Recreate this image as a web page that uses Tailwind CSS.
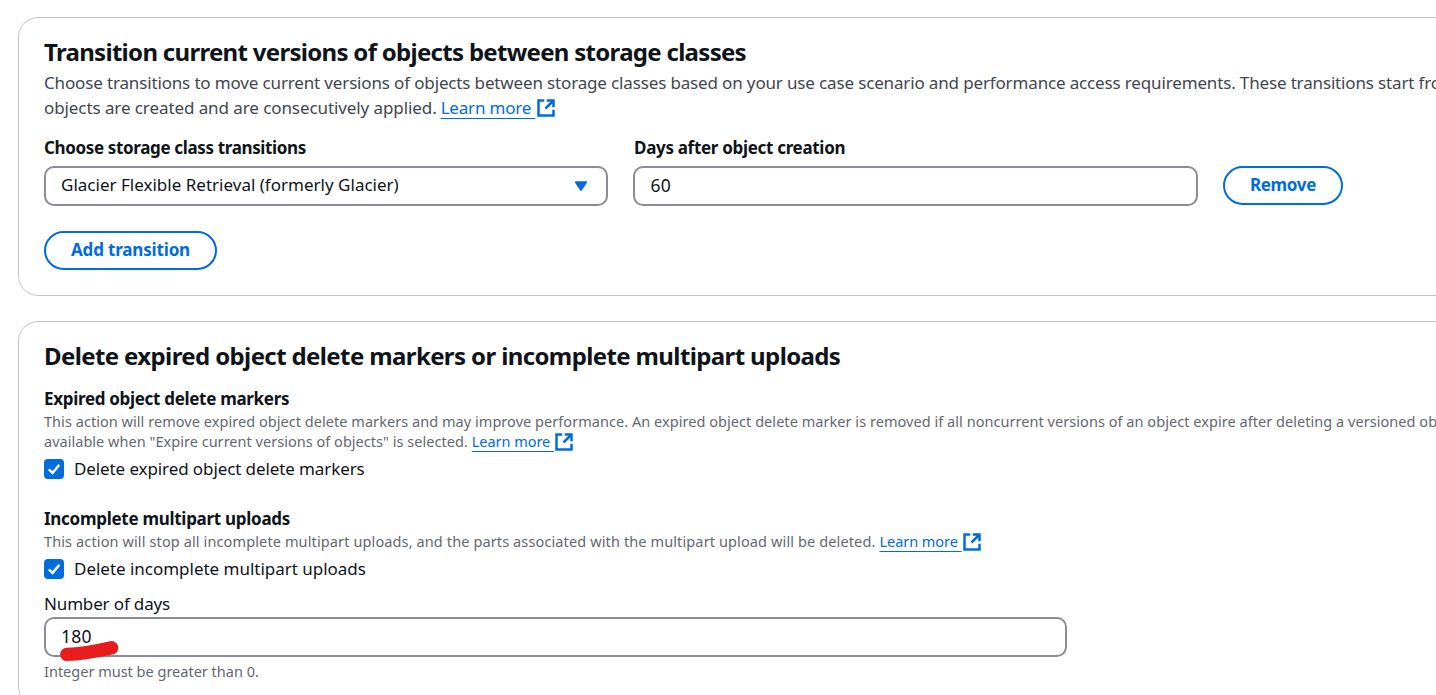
<!DOCTYPE html>
<html lang="en">
<head>
<meta charset="utf-8">
<title>Lifecycle rule actions</title>
<script src="https://cdn.jsdelivr.net/npm/@tailwindcss/browser@4"></script>
</head>
<body class="h-[695px] overflow-hidden bg-white font-['Noto_Sans','Open_Sans',sans-serif] text-[17px] leading-[25px] text-[#0f141a]">
<svg class="hidden">
  <symbol id="external" viewBox="0 0 16 16"><path d="M8.6 2H14v5.4M7.6 8.4L14 2M14 9.4V14H2V2h4.6" fill="none" stroke="currentColor" stroke-width="2"/></symbol>
  <symbol id="check" viewBox="0 0 20 20"><path d="M4.8 10.3 8.6 13.9 15.4 5.8" fill="none" stroke="#fff" stroke-width="2.5"/></symbol>
</svg>
<main class="flex w-full flex-col gap-[25px] overflow-hidden pt-[17px] pl-[18px]">

  <section class="flex w-[1700px] flex-col items-start rounded-[20px] border border-[#c6c6cd] px-[25px] pt-[19px] pb-[25px]">
    <h2 class="text-[24px] leading-[30px] font-bold whitespace-nowrap tracking-[-0.7px]">Transition current versions of objects between storage classes</h2>
    <p class="mt-[3px] flex flex-col whitespace-nowrap text-[#424650]">
      <span class="tracking-[-0.15px]">Choose transitions to move current versions of objects between storage classes based on your use case scenario and performance access requirements. These transitions start from</span>
      <span class="flex items-center"><span class="tracking-[-0.085px]">objects are created and are consecutively applied.</span><a class="ml-1 flex items-center text-[#006ce0]"><span class="tracking-[-0.2px] underline decoration-1 underline-offset-4">Learn more&nbsp;</span><svg class="ml-px size-5"><use href="#external"/></svg></a></span>
    </p>
    <div class="mt-[15px] flex gap-[25px]">
      <div class="flex w-[564px] flex-col gap-1.5">
        <label class="font-bold whitespace-nowrap tracking-[-0.353px]">Choose storage class transitions</label>
        <div class="flex h-10 items-center justify-between rounded-[10px] border-2 border-[#8c8c94] pr-[15px] pb-[3px] pl-[15px]">
          <span class="tracking-[0.01px]">Glacier Flexible Retrieval (formerly Glacier)</span>
          <svg class="mt-[3px] size-5" viewBox="0 0 16 16"><path d="M4 5h8l-4 6-4-6z" fill="#006ce0" stroke="#006ce0" stroke-width="1.7" stroke-linejoin="round"/></svg>
        </div>
      </div>
      <div class="flex w-[565px] flex-col gap-1.5">
        <label class="pl-px font-bold whitespace-nowrap tracking-[-0.31px]">Days after object creation</label>
        <div class="flex h-10 items-center rounded-[10px] border-2 border-[#8c8c94] px-[15.5px] pb-0.5 text-[17.5px] tracking-[0.3px]">60</div>
      </div>
      <button class="mt-[31px] h-[39px] w-[120px] rounded-full border-2 border-[#006ce0] pb-0.5 font-bold tracking-[-0.33px] text-[#006ce0]">Remove</button>
    </div>
    <button class="mt-[25px] h-[39px] w-[173px] rounded-full border-2 border-[#006ce0] pb-0.5 font-bold tracking-[-0.166px] text-[#006ce0]">Add transition</button>
  </section>

  <section class="flex w-[1700px] flex-col items-start rounded-[20px] border border-[#c6c6cd] px-[25px] pt-[19px] pb-[25px]">
    <h2 class="text-[24px] leading-[30px] font-bold whitespace-nowrap tracking-[-0.615px]">Delete expired object delete markers or incomplete multipart uploads</h2>

    <h3 class="mt-[15px] font-bold whitespace-nowrap tracking-[-0.31px]">Expired object delete markers</h3>
    <p class="flex flex-col text-[14.5px] leading-5 whitespace-nowrap text-[#656871]">
      <span class="tracking-[0.046px]">This action will remove expired object delete markers and may improve performance. An expired object delete marker is removed if all noncurrent versions of an object expire after deleting a versioned object.</span>
      <span class="flex items-center"><span class="tracking-[0.025px]">available when "Expire current versions of objects" is selected.</span><a class="ml-1 flex items-center text-[#006ce0]"><span class="tracking-[-0.04px] underline decoration-1 underline-offset-4">Learn more&nbsp;</span><svg class="-mb-0.5 size-5"><use href="#external"/></svg></a></span>
    </p>
    <div class="mt-[5px] flex items-center gap-[10px]">
      <svg class="mt-px size-5 rounded-[4px] bg-[#006ce0]"><use href="#check"/></svg>
      <span class="tracking-[-0.1px]">Delete expired object delete markers</span>
    </div>

    <h3 class="mt-[25px] font-bold whitespace-nowrap tracking-[-0.285px]">Incomplete multipart uploads</h3>
    <p class="flex items-center text-[14.5px] leading-5 whitespace-nowrap text-[#656871]">
      <span class="tracking-[0.12px]">This action will stop all incomplete multipart uploads, and the parts associated with the multipart upload will be deleted.</span><a class="ml-1 flex items-center text-[#006ce0]"><span class="tracking-[-0.04px] underline decoration-1 underline-offset-4">Learn more&nbsp;</span><svg class="-mb-0.5 size-5"><use href="#external"/></svg></a>
    </p>
    <div class="mt-[5px] flex items-center gap-[10px]">
      <svg class="mt-px size-5 rounded-[4px] bg-[#006ce0]"><use href="#check"/></svg>
      <span class="tracking-[-0.02px]">Delete incomplete multipart uploads</span>
    </div>

    <label class="mt-[10px] tracking-[-0.15px]">Number of days</label>
    <div class="relative mt-px flex h-10 w-[1023px] items-center rounded-[10px] border-2 border-[#8c8c94] px-[15px] pb-0.5 text-[17.5px] tracking-[0.3px]">180
      <svg class="absolute top-[19px] left-[10px] h-[26px] w-[68px]" viewBox="0 0 68 26"><path d="M10.8 16.4Q28 16 55.6 9.8" fill="none" stroke="#e81c1c" stroke-width="13.4" stroke-linecap="round"/></svg>
    </div>
    <p class="mt-1 text-[14.5px] leading-5 text-[#656871]">Integer must be greater than 0.</p>
  </section>
</main>
</body>
</html>
